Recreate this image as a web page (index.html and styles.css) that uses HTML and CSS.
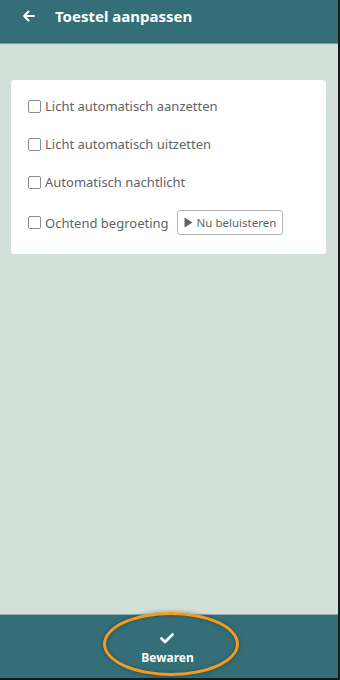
FILE: index.html
```html
<!DOCTYPE html>
<html lang="nl">
<head>
<meta charset="utf-8">
<title>Toestel aanpassen</title>
<link rel="stylesheet" href="styles.css">
</head>
<body>
<div class="app">
  <header class="topbar">
    <svg class="back" width="13" height="12" viewBox="0 0 13 12"><path d="M12 6H2M6.5 1.5L2 6l4.5 4.5" fill="none" stroke="#fff" stroke-width="2" stroke-linecap="round" stroke-linejoin="round"/></svg>
    <h1 class="title">Toestel aanpassen</h1>
  </header>
  <main class="content">
    <section class="card">
      <label class="row"><span class="box"></span><span class="label">Licht automatisch aanzetten</span></label>
      <label class="row"><span class="box"></span><span class="label">Licht automatisch uitzetten</span></label>
      <label class="row"><span class="box"></span><span class="label">Automatisch nachtlicht</span></label>
      <div class="row last">
        <label class="check"><span class="box"></span><span class="label">Ochtend begroeting</span></label>
        <button class="listen"><svg width="9" height="11" viewBox="0 0 9 11"><path d="M0.5 0.5L8.5 5.5L0.5 10.5Z" fill="#5f6368"/></svg><span>Nu beluisteren</span></button>
      </div>
    </section>
  </main>
  <footer class="bottombar">
    <div class="save">
      <svg width="14" height="11" viewBox="0 0 14 11"><path d="M1.5 5.5L5 9L12.5 1.5" fill="none" stroke="#fff" stroke-width="2.6" stroke-linecap="round" stroke-linejoin="round"/></svg>
      <span class="save-text">Bewaren</span>
    </div>
    <div class="highlight"></div>
  </footer>
</div>
</body>
</html>
```
FILE: styles.css
```css
html, body {
  margin: 0;
  padding: 0;
}
body {
  background: #151a1a;
  width: 340px;
  height: 680px;
  font-family: "Noto Sans", Lato, sans-serif;
}
.app {
  width: 338px;
  height: 678px;
  display: flex;
  flex-direction: column;
  background: #d3e0d9;
}
.topbar {
  height: 44px;
  background: #346f77;
  border-bottom: 1px solid #6fa1a3;
  display: flex;
  align-items: center;
  box-sizing: border-box;
  padding-left: 22px;
  padding-bottom: 12px;
}
.back {
  display: block;
}
.title {
  margin: 0 0 0 20px;
  color: #fff;
  font-size: 15px;
  font-weight: 700;
  line-height: 20px;
}
.content {
  flex: 1;
  padding: 36px 12px 0 11px;
}
.card {
  background: #fff;
  border-radius: 3px;
  padding: 16px 17px 19px;
  display: flex;
  flex-direction: column;
  gap: 18px;
}
.row, .check {
  display: flex;
  align-items: center;
  height: 20px;
}
.row.last {
  height: 25px;
  gap: 8px;
}
.box {
  width: 11px;
  height: 11px;
  border: 1px solid #8a8d91;
  border-radius: 2px;
  margin-right: 4px;
  flex: none;
}
.label {
  color: #5f6368;
  font-size: 13px;
}
.listen {
  height: 25px;
  width: 106px;
  box-sizing: border-box;
  border: 1px solid #b5b8bb;
  border-radius: 3px;
  background: #fff;
  display: flex;
  align-items: center;
  padding: 0 0 0 6px;
  gap: 4px;
  font-family: "Noto Sans", Lato, sans-serif;
  font-size: 11.5px;
  color: #5f6368;
}
.bottombar {
  height: 64px;
  background: #346f77;
  border-top: 1px solid #8fb0ac;
  box-sizing: border-box;
  display: flex;
  justify-content: center;
  position: relative;
}
.save {
  display: flex;
  flex-direction: column;
  align-items: center;
  padding-top: 18px;
  margin-left: -3px;
  gap: 5px;
}
.save svg {
  display: block;
}
.save-text {
  color: #fff;
  font-size: 12px;
  font-weight: 700;
}
.highlight {
  position: absolute;
  left: 103px;
  top: -3px;
  width: 136px;
  height: 64px;
  box-sizing: border-box;
  border: 3px solid #f49a1f;
  border-radius: 50%;
  box-shadow: 0 0 4px rgba(0,0,0,0.35), inset 0 0 4px rgba(0,0,0,0.3);
}
```
